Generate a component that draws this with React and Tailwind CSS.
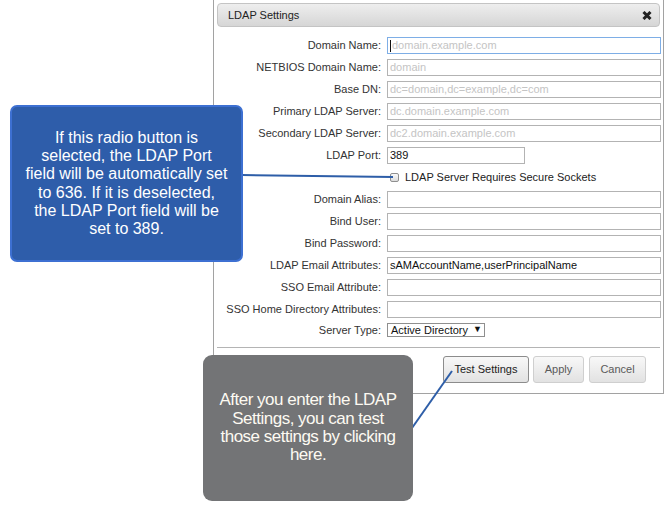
import React from "react";

const rows = [
  { label: "Domain Name:", placeholder: "domain.example.com", focus: true },
  { label: "NETBIOS Domain Name:", placeholder: "domain" },
  { label: "Base DN:", placeholder: "dc=domain,dc=example,dc=com" },
  { label: "Primary LDAP Server:", placeholder: "dc.domain.example.com" },
  { label: "Secondary LDAP Server:", placeholder: "dc2.domain.example.com" },
];

const rows2 = [
  { label: "Domain Alias:" },
  { label: "Bind User:" },
  { label: "Bind Password:" },
  { label: "LDAP Email Attributes:", value: "sAMAccountName,userPrincipalName" },
  { label: "SSO Email Attribute:" },
  { label: "SSO Home Directory Attributes:" },
];

function Label({ children }) {
  return (
    <div className="flex h-[17px] items-center justify-end whitespace-nowrap text-[11px] text-[#333]">
      {children}
    </div>
  );
}

function Field({ placeholder, value, focus, width = "w-[274px]" }) {
  return (
    <div
      className={`relative flex h-[17px] ${width} items-center overflow-hidden whitespace-nowrap border bg-white pl-[2px] text-[11px] ${
        focus ? "border-[#7eaee6]" : "border-[#b3b3b3]"
      }`}
    >
      {focus && <span className="mr-[1px] h-[12px] w-[1px] bg-[#111]" />}
      {value ? (
        <span className="text-[#111]">{value}</span>
      ) : (
        <span className="text-[#c4c4c4]">{placeholder}</span>
      )}
    </div>
  );
}

function Btn({ children, primary, w }) {
  return (
    <div
      className={`flex h-[27px] ${w} items-center justify-center rounded-[3px] border bg-gradient-to-b from-[#f8f8f8] to-[#e2e2e2] text-[11px] ${
        primary ? "border-[#8c8c8c] text-[#222]" : "border-[#cfcfcf] text-[#5a5a5a]"
      }`}
    >
      {children}
    </div>
  );
}

export default function App() {
  return (
    <div
      className="relative h-[512px] w-[665px] overflow-hidden bg-white"
      style={{ fontFamily: '"Liberation Sans", Arial, sans-serif' }}
    >
      {/* Dialog window */}
      <div className="absolute left-[213px] top-[-1px] w-[451px] border border-[#a2a2a2] bg-white px-[3px] pt-[3px]">
        <div className="flex h-[24px] items-center justify-between rounded-[4px] border border-[#c4c4c4] bg-gradient-to-b from-[#eeeeee] to-[#d6d6d6] pl-[10px] pr-[7px]">
          <span className="text-[11px] text-[#222]">LDAP Settings</span>
          <svg width="10" height="9" viewBox="0 0 10 9">
            <path d="M1.5 1 L8.5 8 M8.5 1 L1.5 8" stroke="#222" strokeWidth="3" strokeLinecap="butt" />
          </svg>
        </div>

        <div className="mt-[10px] grid grid-cols-[164px_274px] gap-x-[6px] gap-y-[5px]">
          {rows.map((r) => (
            <React.Fragment key={r.label}>
              <Label>{r.label}</Label>
              <Field placeholder={r.placeholder} focus={r.focus} />
            </React.Fragment>
          ))}
          <Label>LDAP Port:</Label>
          <Field value="389" width="w-[138px]" />
          <div />
          <div className="flex h-[17px] items-center pl-[3px]">
            <span className="h-[9px] w-[9px] rounded-[2px] border border-[#8f8f8f] bg-gradient-to-b from-[#fafafa] to-[#dcdcdc]" />
            <span className="ml-[6px] whitespace-nowrap text-[11px] text-[#222]">
              LDAP Server Requires Secure Sockets
            </span>
          </div>
          {rows2.map((r) => (
            <React.Fragment key={r.label}>
              <Label>{r.label}</Label>
              <Field value={r.value} />
            </React.Fragment>
          ))}
          <div className="flex h-[14px] items-center justify-end text-[11px] text-[#333]">Server Type:</div>
          <div className="flex h-[14px] w-[98px] items-center whitespace-nowrap border border-[#8f8f8f] bg-white pl-[3px] text-[11px] text-[#111]">
            Active Directory <span className="ml-[5px] text-[9px]">▼</span>
          </div>
        </div>

        <div className="mt-[10px] h-[1px] bg-[#b4b4b4]" />

        <div className="mt-[8px] mb-[10px] flex justify-end pr-[14px]">
          <Btn primary w="w-[86px]">Test Settings</Btn>
          <div className="w-[4px]" />
          <Btn w="w-[51px]">Apply</Btn>
          <div className="w-[5px]" />
          <Btn w="w-[57px]">Cancel</Btn>
        </div>
      </div>

      {/* Connector lines */}
      <svg className="absolute left-0 top-0" width="665" height="512">
        <line x1="242" y1="175" x2="393" y2="177" stroke="#2e5ea8" strokeWidth="2" />
        <line x1="412" y1="428" x2="452" y2="371" stroke="#2e5ea8" strokeWidth="2" />
      </svg>

      {/* Blue callout */}
      <div className="absolute left-[10px] top-[105px] flex h-[157px] w-[233px] items-center justify-center rounded-[7px] border-2 border-[#3d70d2] bg-[#2e5daa] text-center text-[16px] leading-[18.3px] text-white">
        <p className="whitespace-nowrap">
          If this radio button is
          <br />
          selected, the LDAP Port
          <br />
          field will be automatically set
          <br />
          to 636. If it is deselected,
          <br />
          the LDAP Port field will be
          <br />
          set to 389.
        </p>
      </div>

      {/* Gray callout */}
      <div className="absolute left-[203px] top-[355px] flex h-[146px] w-[210px] items-center justify-center rounded-[9px] bg-[#737476] text-center text-[17px] leading-[18.3px] text-[#fdfaf2]">
        <p className="tracking-[-0.5px] whitespace-nowrap">
          After you enter the LDAP
          <br />
          Settings, you can test
          <br />
          those settings by clicking
          <br />
          here.
        </p>
      </div>
    </div>
  );
}
